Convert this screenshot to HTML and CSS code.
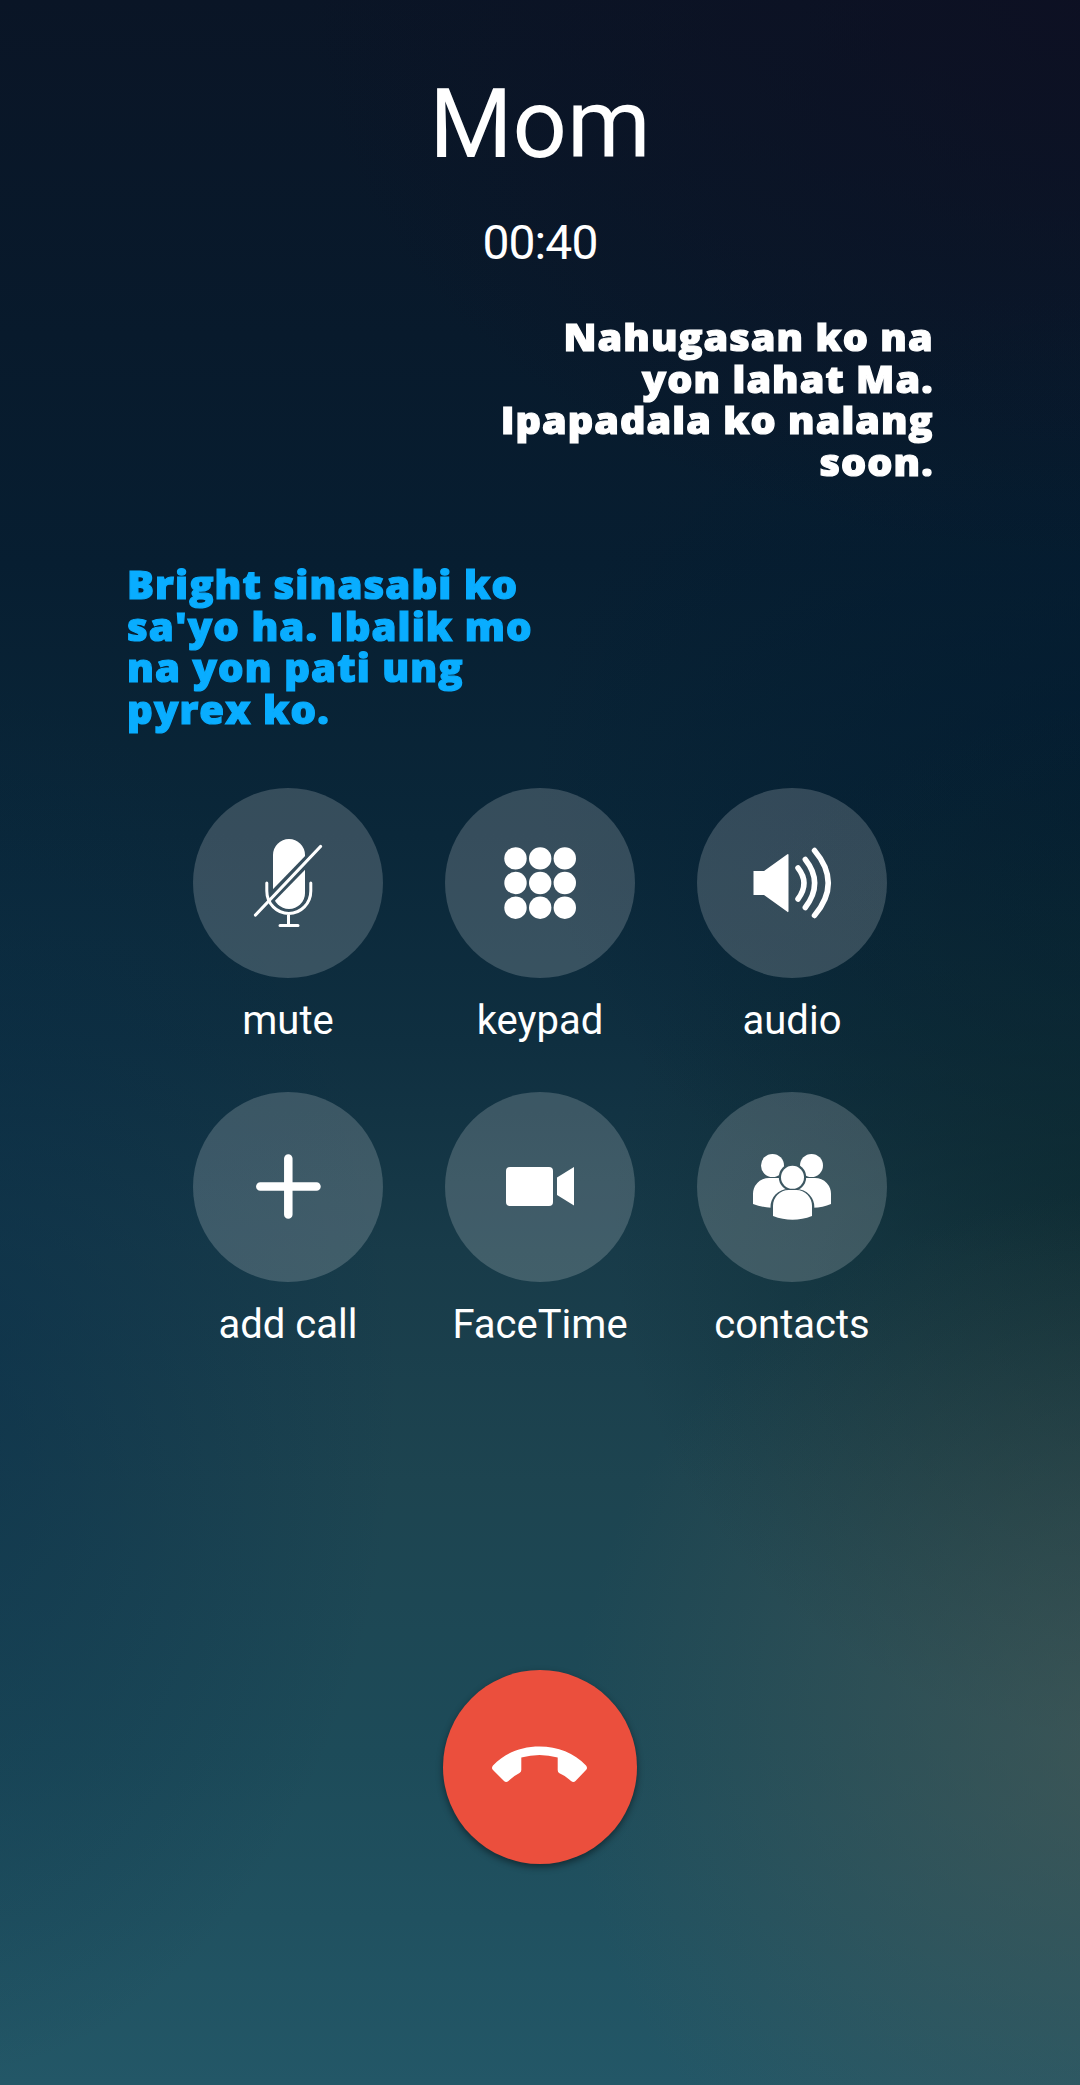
FILE: index.html
```html
<!DOCTYPE html>
<html lang="tl">
<head>
    <meta charset="UTF-8">
    <meta name="viewport" content="width=device-width, initial-scale=1.0">
    <title>Mom</title>
    <link rel="stylesheet" href="styles.css">
</head>
<body>
    <div class="call-screen">
        <h1>Mom</h1>
        <p class="timer">00:40</p>

        <p class="message mine">Nahugasan ko na<br>yon lahat Ma.<br>Ipapadala ko nalang<br>soon.</p>
        <p class="message theirs">Bright sinasabi ko<br>sa'yo ha. Ibalik mo<br>na yon pati ung<br>pyrex ko.</p>

        <div class="controls">
            <div class="control">
                <button class="round">
                    <svg viewBox="0 0 190 190">
                        <defs>
                            <mask id="slash">
                                <rect width="190" height="190" fill="#fff"/>
                                <path d="M62 126.500 L128 58.500" stroke="#000" stroke-width="9.500"/>
                            </mask>
                        </defs>
                        <rect x="80" y="51" width="32" height="70" rx="16" mask="url(#slash)"/>
                        <path class="line" d="M73.800 95 V103 A22 22.500 0 0 0 117.800 103 V95 M95.500 126 V137.500 M87 137.500 H105" stroke-width="3"/>
                        <path class="line" d="M62.500 127 L127.500 58.500" stroke-width="3.200"/>
                    </svg>
                </button>
                <span>mute</span>
            </div>
            <div class="control">
                <button class="round">
                    <svg viewBox="0 0 190 190">
                        <circle cx="70.500" cy="70.400" r="11.200"/>
                        <circle cx="95.200" cy="70.400" r="11.200"/>
                        <circle cx="119.800" cy="70.400" r="11.200"/>
                        <circle cx="70.500" cy="95" r="11.200"/>
                        <circle cx="95.200" cy="95" r="11.200"/>
                        <circle cx="119.800" cy="95" r="11.200"/>
                        <circle cx="70.500" cy="119.700" r="11.200"/>
                        <circle cx="95.200" cy="119.700" r="11.200"/>
                        <circle cx="119.800" cy="119.700" r="11.200"/>
                    </svg>
                </button>
                <span>keypad</span>
            </div>
            <div class="control">
                <button class="round">
                    <svg viewBox="0 0 190 190">
                        <path d="M56.500 83 H67 L90 66.500 Q91.500 65.500 91.500 67 V123 Q91.500 125 90 123.500 L67 107 H56.500 Z"/>
                        <path class="line" d="M101 80 Q113 95 101 111 M108.300 71.500 Q127 95 108.300 119.500 M117.500 62.500 Q145 95 117.500 127.500" stroke-width="5.500"/>
                    </svg>
                </button>
                <span>audio</span>
            </div>
            <div class="control">
                <button class="round">
                    <svg viewBox="0 0 190 190">
                        <path class="line" d="M95.300 66.500 V122.500 M67.300 94.500 H123.500" stroke-width="8.500"/>
                    </svg>
                </button>
                <span>add call</span>
            </div>
            <div class="control">
                <button class="round">
                    <svg viewBox="0 0 190 190">
                        <rect x="61" y="75" width="47" height="39" rx="4"/>
                        <path d="M112 85.500 L129 75 V113.500 L112 103 Z"/>
                    </svg>
                </button>
                <span>FaceTime</span>
            </div>
            <div class="control">
                <button class="round">
                    <svg viewBox="0 0 190 190">
                        <defs>
                            <mask id="front">
                                <rect width="190" height="190" fill="#fff"/>
                                <circle cx="95.500" cy="85.300" r="13.700" fill="#000"/>
                                <path d="M73.500 140 V116 A18 18 0 0 1 91.500 97 H99.500 A18 18 0 0 1 117.300 116 V140 Z" fill="#000"/>
                            </mask>
                        </defs>
                        <g mask="url(#front)">
                            <circle cx="75.500" cy="73.500" r="11.500"/>
                            <circle cx="114.500" cy="73.500" r="11.500"/>
                            <path d="M56 112 V103 A16 16 0 0 1 72 86 H118 A16 16 0 0 1 134 103 V112 Q126 115.500 116 115.700 H74 Q64 115 56 112 Z"/>
                        </g>
                        <circle cx="95.500" cy="85.300" r="11.500"/>
                        <path d="M76 124 V114 A15.500 16 0 0 1 91.500 98 H99.500 A15.500 16 0 0 1 115 114 V124 Q95.500 131.500 76 124 Z"/>
                    </svg>
                </button>
                <span>contacts</span>
            </div>
        </div>

        <button class="round hangup">
            <svg viewBox="0 0 194 194">
                <path d="M50 95.500 C62 83 78 76.500 96.500 76.500 C115 76.500 131 83 143 95.500 Q145 98 143 100 L132.500 111 Q130.500 113 128 111 Q122 105.500 116 103 Q114.700 102 114.700 100 V87.500 Q96.500 82.500 78.300 87.500 V100 Q78.300 102 76.500 103 Q70.500 106 65.500 111 Q63 113 61 111 L50 100 Q48 98 50 95.500 Z"/>
            </svg>
        </button>
    </div>
</body>
</html>
```

FILE: styles.css
```css
* {
    box-sizing: border-box;
}
body {
    margin: 0;
    font-family: Roboto, sans-serif;
    color: #fff;
}
.call-screen {
    display: flex;
    flex-direction: column;
    align-items: center;
    width: 1080px;
    height: 2085px;
    padding-top: 68px;
    background:
        radial-gradient(ellipse 560px 560px at 1130px 1750px, rgba(80, 92, 84, 0.6), rgba(80, 92, 84, 0) 100%),
        radial-gradient(ellipse 520px 520px at 1130px 1220px, rgba(12, 40, 44, 0.7), rgba(12, 40, 44, 0) 100%),
        radial-gradient(ellipse 460px 700px at -60px 1380px, rgba(4, 42, 74, 0.5), rgba(4, 42, 74, 0) 100%),
        radial-gradient(ellipse 600px 500px at 1130px 780px, rgba(2, 26, 46, 0.7), rgba(2, 26, 46, 0) 100%),
        radial-gradient(ellipse 800px 560px at 1100px 0, rgba(14, 15, 34, 0.8), rgba(14, 15, 34, 0) 100%),
        linear-gradient(180deg, #0a1526 0%, #081a2c 16%, #071e31 27%, #0a2739 40%, #0f2f40 50%, #183b49 60%, #1d4450 71%, #1d4b59 84%, #235767 100%);
}
h1 {
    margin: 0;
    font-size: 95.500px;
    font-weight: 400;
    line-height: 112px;
}
.timer {
    margin: 35px 0 0;
    font-size: 48px;
    letter-spacing: -0.9px;
    line-height: 56px;
}
.message {
    margin: 0;
    font-family: "Open Sans", sans-serif;
    font-weight: 800;
    letter-spacing: 1px;
    line-height: 41.5px;
    white-space: nowrap;
    -webkit-text-stroke: 1.2px currentColor;
}
.mine {
    align-self: flex-end;
    margin: 45px 146px 0 0;
    font-size: 37px;
    text-align: right;
    transform: scaleX(1.07);
    transform-origin: right;
}
.theirs {
    align-self: flex-start;
    margin: 82px 0 0 127px;
    font-size: 38px;
    color: #09adff;
    transform: scaleX(1.057);
    transform-origin: left;
}
.controls {
    display: grid;
    grid-template-columns: repeat(3, 190px);
    gap: 47px 62px;
    margin-top: 58px;
}
.control {
    display: flex;
    flex-direction: column;
    align-items: center;
    gap: 19px;
    font-size: 40px;
    line-height: 48px;
}
.round {
    width: 190px;
    height: 190px;
    padding: 0;
    border: none;
    border-radius: 50%;
    background: rgba(255, 255, 255, 0.18);
}
.round svg {
    display: block;
    width: 100%;
    height: 100%;
    fill: #fff;
}
.round .line {
    fill: none;
    stroke: #fff;
    stroke-linecap: round;
}
.hangup {
    width: 194px;
    height: 194px;
    margin-top: 321px;
    background: #eb4f3d;
    box-shadow: 0 3px 7px rgba(0, 0, 0, 0.45);
}
```
